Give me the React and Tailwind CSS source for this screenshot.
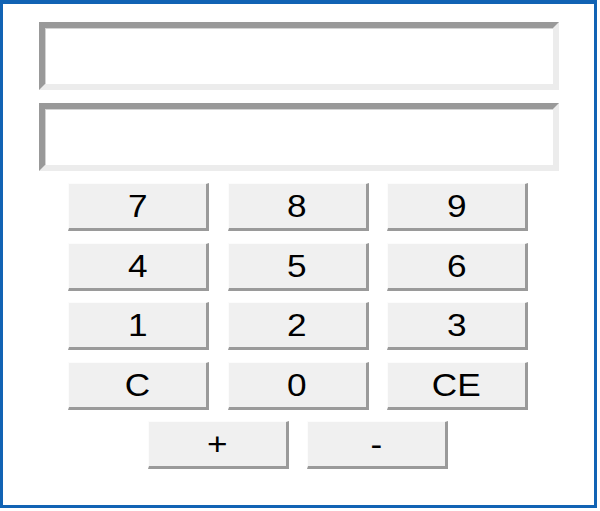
import React from "react";

const btn =
  "w-[141px] h-[48px] bg-[#f0f0f0] border-t border-l border-r-[3px] border-b-[3px] border-t-[#fcfcfc] border-l-[#fcfcfc] border-r-[#9a9a9a] border-b-[#9a9a9a] flex items-center justify-center text-[32px] leading-none text-black font-['Liberation_Sans',Arial,sans-serif]";

const field =
  "w-[520px] h-[68px] bg-white border-[6px] border-t-[#999999] border-l-[#999999] border-r-[#ececec] border-b-[#ececec] shadow-[inset_1px_1px_0_#d4d4d4]";

function Key({ label }) {
  return (
    <button className={btn}>
      <span className="inline-block scale-x-110">{label}</span>
    </button>
  );
}

export default function App() {
  const keys = ["7", "8", "9", "4", "5", "6", "1", "2", "3", "C", "0", "CE"];
  return (
    <div className="w-[600px] h-[511px] bg-white">
      <div className="w-[597px] h-[508px] bg-white border-[3px] border-t-4 border-[#1163b4] flex flex-col items-center pt-[18px]">
        <div className={field} />
        <div className={field + " mt-[13px]"} />
        <div className="grid grid-cols-3 gap-x-[18.5px] gap-y-[11.5px] mt-[12px] -ml-[1px]">
          {keys.map((k) => (
            <Key key={k} label={k} />
          ))}
        </div>
        <div className="flex gap-[18px] mt-[11.5px] -ml-[1px]">
          <Key label="+" />
          <Key label="-" />
        </div>
      </div>
    </div>
  );
}
